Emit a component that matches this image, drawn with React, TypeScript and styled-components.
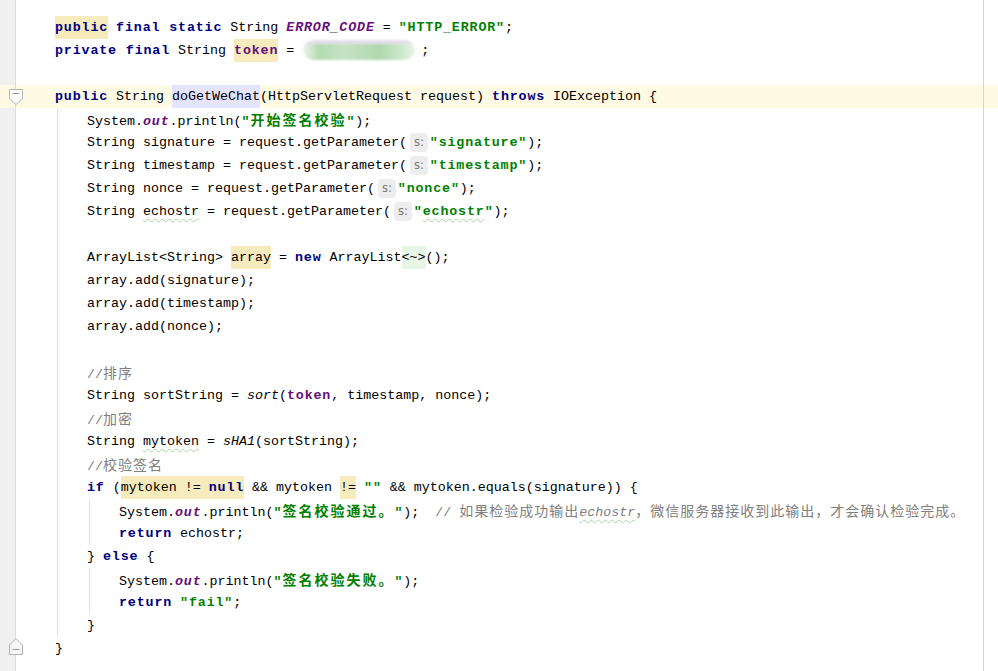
import React from "react";
import styled, { createGlobalStyle } from "styled-components";

const GlobalStyle = createGlobalStyle`
  html, body {
    margin: 0;
    padding: 0;
    background: #ffffff;
  }
  body {
    overflow: hidden;
  }
`;

const Editor = styled.div`
  position: relative;
  width: 998px;
  height: 671px;
  overflow: hidden;
  box-sizing: border-box;
  padding-top: 16px;
  background: linear-gradient(to right, #f0f0f0 0 15px, #dcdcdc 15px 16px, #ffffff 16px);
  font-family: "Liberation Mono", "DejaVu Sans Mono", monospace;
  font-size: 13.33px;
  color: #000000;
`;

const MarginGuide = styled.div`
  position: absolute;
  top: 0;
  bottom: 0;
  left: 983px;
  width: 1px;
  background: #d4d4d4;
`;

const Row = styled.div<{ $active?: boolean }>`
  display: flex;
  height: 23px;
  line-height: 23px;
  white-space: pre;
  background: ${(p) => (p.$active ? "#fefae4" : "transparent")};
`;

const GutterCell = styled.div<{ $active?: boolean }>`
  position: relative;
  flex: 0 0 15px;
  border-right: 1px solid #dcdcdc;
  background: ${(p) => (p.$active ? "transparent" : "#f0f0f0")};
`;

const FoldMark = styled.svg<{ $top: number }>`
  position: absolute;
  left: 9px;
  top: ${(p) => p.$top}px;
`;

const Code = styled.div`
  flex: 1;
  padding-left: 39px;
`;

const Guide = styled.span`
  display: inline-block;
  width: 32px;
  height: 23px;
  vertical-align: top;
  background: linear-gradient(#e2e2e2, #e2e2e2) 2px 0 / 1px 100% no-repeat;
`;

const Kw = styled.span`
  color: #000080;
  font-weight: bold;
  letter-spacing: 0.85px;
`;

const Str = styled.span`
  color: #008000;
  font-weight: bold;
  letter-spacing: 0.85px;
`;

const Field = styled.span<{ $italic?: boolean }>`
  color: #660e7a;
  font-weight: bold;
  letter-spacing: 0.85px;
  font-style: ${(p) => (p.$italic ? "italic" : "normal")};
`;

const Static = styled.span`
  font-style: italic;
`;

const Comment = styled.span`
  color: #808080;
`;

const Cjk = styled.span<{ $bold?: boolean }>`
  font-family: "Noto Sans CJK SC", sans-serif;
  font-size: 14px;
  letter-spacing: ${(p) => (p.$bold ? "2px" : "1px")};
`;

const tones = {
  yellow: "#f6ebbc",
  lavender: "#e4e4ff",
  green: "#e8f6e8",
};

const Mark = styled.span<{ $tone: keyof typeof tones }>`
  display: inline-block;
  height: 23px;
  vertical-align: top;
  background: ${(p) => tones[p.$tone]};
`;

const Hint = styled.span`
  display: inline-block;
  margin: 0 2px 0 3px;
  padding: 0 4px;
  height: 19px;
  line-height: 19px;
  vertical-align: middle;
  border-radius: 4px;
  background: #ededed;
  color: #7a7a7a;
  font-family: "DejaVu Sans", sans-serif;
  font-size: 11.5px;
  letter-spacing: 0;
  font-weight: normal;
`;

const Typo = styled.span<{ $italic?: boolean }>`
  font-style: ${(p) => (p.$italic ? "italic" : "inherit")};
  text-decoration: underline wavy #a3d6a3;
  text-decoration-thickness: 1px;
  text-underline-offset: 3px;
`;

const Blurred = styled.span`
  display: inline-block;
  width: 112px;
  height: 20px;
  margin-left: 9px;
  margin-right: 6px;
  vertical-align: middle;
  border-radius: 10px;
  background: linear-gradient(180deg, rgba(232, 222, 240, 0.9) 0 22%, transparent 22%),
    linear-gradient(90deg, #edf5ec 0, #b4dbb3 14%, #c6e3c5 38%, #b0d8ae 68%, #c9e6c8 86%, #eaf4e9 100%);
  filter: blur(1.2px);
`;

type Line = {
  level: number;
  active?: boolean;
  fold?: "down" | "up";
  content?: React.ReactNode;
};

const FoldDown = () => (
  <FoldMark $top={4} width="14" height="16" viewBox="0 0 14 16">
    <path d="M0.5 0.5 H13.5 V9.5 L7 15.5 L0.5 9.5 Z" fill="#ffffff" stroke="#b4b4b4" />
    <path d="M3.5 4.5 H10.5" stroke="#9a9a9a" />
  </FoldMark>
);

const FoldUp = () => (
  <FoldMark $top={1} width="14" height="17" viewBox="0 0 14 17">
    <path d="M0.5 16.5 H13.5 V7 L7 0.5 L0.5 7 Z" fill="#f6f6f6" stroke="#b4b4b4" />
    <path d="M3.5 11.5 H10.5" stroke="#9a9a9a" />
  </FoldMark>
);

const lines: Line[] = [
  {
    level: 0,
    content: (
      <>
        <Mark $tone="yellow">
          <Kw>public</Kw>
        </Mark>{" "}
        <Kw>final static</Kw>
        {" String "}
        <Field $italic>ERROR_CODE</Field>
        {" = "}
        <Str>"HTTP_ERROR"</Str>
        {";"}
      </>
    ),
  },
  {
    level: 0,
    content: (
      <>
        <Kw>private final</Kw>
        {" String "}
        <Mark $tone="yellow">
          <Field>token</Field>
        </Mark>
        {" ="}
        <Blurred />
        {";"}
      </>
    ),
  },
  { level: 0 },
  {
    level: 0,
    active: true,
    fold: "down",
    content: (
      <>
        <Kw>public</Kw>
        {" String "}
        <Mark $tone="lavender">doGetWeChat</Mark>
        {"(HttpServletRequest request) "}
        <Kw>throws</Kw>
        {" IOException {"}
      </>
    ),
  },
  {
    level: 1,
    content: (
      <>
        {"System."}
        <Field $italic>out</Field>
        {".println("}
        <Str>
          "<Cjk $bold>开始签名校验</Cjk>"
        </Str>
        {");"}
      </>
    ),
  },
  {
    level: 1,
    content: (
      <>
        {"String signature = request.getParameter("}
        <Hint>s:</Hint>
        <Str>"signature"</Str>
        {");"}
      </>
    ),
  },
  {
    level: 1,
    content: (
      <>
        {"String timestamp = request.getParameter("}
        <Hint>s:</Hint>
        <Str>"timestamp"</Str>
        {");"}
      </>
    ),
  },
  {
    level: 1,
    content: (
      <>
        {"String nonce = request.getParameter("}
        <Hint>s:</Hint>
        <Str>"nonce"</Str>
        {");"}
      </>
    ),
  },
  {
    level: 1,
    content: (
      <>
        {"String "}
        <Typo>echostr</Typo>
        {" = request.getParameter("}
        <Hint>s:</Hint>
        <Str>
          "<Typo>echostr</Typo>"
        </Str>
        {");"}
      </>
    ),
  },
  { level: 1 },
  {
    level: 1,
    content: (
      <>
        {"ArrayList<String> "}
        <Mark $tone="yellow">array</Mark>
        {" = "}
        <Kw>new</Kw>
        {" ArrayList"}
        <Mark $tone="green">{"<~>"}</Mark>
        {"();"}
      </>
    ),
  },
  { level: 1, content: "array.add(signature);" },
  { level: 1, content: "array.add(timestamp);" },
  { level: 1, content: "array.add(nonce);" },
  { level: 1 },
  {
    level: 1,
    content: (
      <Comment>
        //<Cjk>排序</Cjk>
      </Comment>
    ),
  },
  {
    level: 1,
    content: (
      <>
        {"String sortString = "}
        <Static>sort</Static>
        {"("}
        <Field>token</Field>
        {", timestamp, nonce);"}
      </>
    ),
  },
  {
    level: 1,
    content: (
      <Comment>
        //<Cjk>加密</Cjk>
      </Comment>
    ),
  },
  {
    level: 1,
    content: (
      <>
        {"String "}
        <Typo>mytoken</Typo>
        {" = "}
        <Static>sHA1</Static>
        {"(sortString);"}
      </>
    ),
  },
  {
    level: 1,
    content: (
      <Comment>
        //<Cjk>校验签名</Cjk>
      </Comment>
    ),
  },
  {
    level: 1,
    content: (
      <>
        <Kw>if</Kw>
        {" ("}
        <Mark $tone="yellow">
          {"mytoken != "}
          <Kw>null</Kw>
        </Mark>
        {" && mytoken "}
        <Mark $tone="yellow">!=</Mark>
        {" "}
        <Str>""</Str>
        {" && mytoken.equals(signature)) {"}
      </>
    ),
  },
  {
    level: 2,
    content: (
      <>
        {"System."}
        <Field $italic>out</Field>
        {".println("}
        <Str>
          "<Cjk $bold>签名校验通过。</Cjk>"
        </Str>
        {");  "}
        <Comment>
          {"// "}
          <Cjk>如果检验成功输出</Cjk>
          <Typo $italic>echostr</Typo>
          <Cjk>，微信服务器接收到此输出，才会确认检验完成。</Cjk>
        </Comment>
      </>
    ),
  },
  {
    level: 2,
    content: (
      <>
        <Kw>return</Kw>
        {" echostr;"}
      </>
    ),
  },
  {
    level: 1,
    content: (
      <>
        {"} "}
        <Kw>else</Kw>
        {" {"}
      </>
    ),
  },
  {
    level: 2,
    content: (
      <>
        {"System."}
        <Field $italic>out</Field>
        {".println("}
        <Str>
          "<Cjk $bold>签名校验失败。</Cjk>"
        </Str>
        {");"}
      </>
    ),
  },
  {
    level: 2,
    content: (
      <>
        <Kw>return</Kw>
        {" "}
        <Str>"fail"</Str>
        {";"}
      </>
    ),
  },
  { level: 1, content: "}" },
  { level: 0, fold: "up", content: "}" },
];

export default function App() {
  return (
    <>
      <GlobalStyle />
      <Editor>
        {lines.map((line, i) => (
          <Row key={i} $active={line.active}>
            <GutterCell $active={line.active}>
              {line.fold === "down" && <FoldDown />}
              {line.fold === "up" && <FoldUp />}
            </GutterCell>
            <Code>
              {Array.from({ length: line.level }).map((_, g) => (
                <Guide key={g} />
              ))}
              {line.content}
            </Code>
          </Row>
        ))}
        <MarginGuide />
      </Editor>
    </>
  );
}
